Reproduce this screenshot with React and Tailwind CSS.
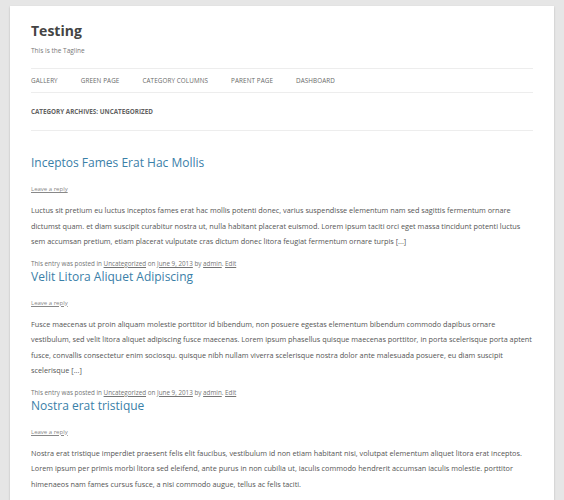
import React from 'react';

const posts = [
  {
    title: 'Inceptos Fames Erat Hac Mollis',
    body: 'Luctus sit pretium eu luctus inceptos fames erat hac mollis potenti donec, varius suspendisse elementum nam sed sagittis fermentum ornare dictumst quam. et diam suscipit curabitur nostra ut, nulla habitant placerat euismod. Lorem ipsum taciti orci eget massa tincidunt potenti luctus sem accumsan pretium, etiam placerat vulputate cras dictum donec litora feugiat fermentum ornare turpis [...]',
  },
  {
    title: 'Velit Litora Aliquet Adipiscing',
    body: 'Fusce maecenas ut proin aliquam molestie porttitor id bibendum, non posuere egestas elementum bibendum commodo dapibus ornare vestibulum, sed velit litora aliquet adipiscing fusce maecenas. Lorem ipsum phasellus quisque maecenas porttitor, in porta scelerisque porta aptent fusce, convallis consectetur enim sociosqu. quisque nibh nullam viverra scelerisque nostra dolor ante malesuada posuere, eu diam suscipit scelerisque [...]',
  },
  {
    title: 'Nostra erat tristique',
    body: 'Nostra erat tristique imperdiet praesent felis elit faucibus, vestibulum id non etiam habitant nisi, volutpat elementum aliquet litora erat inceptos. Lorem ipsum per primis morbi litora sed eleifend, ante purus in non cubilia ut, iaculis commodo hendrerit accumsan iaculis molestie. porttitor himenaeos nam fames cursus fusce, a nisi commodo augue, tellus ac felis taciti.',
  },
];

const nav = ['Gallery', 'Green Page', 'Category Columns', 'Parent Page', 'Dashboard'];

const App = () => {
  return (
    <div className="min-h-screen bg-[#e6e6e6] pt-[6px] pl-[10px] pr-[10px] overflow-hidden" style={{ fontFamily: '"Open Sans", sans-serif' }}>
      <div className="h-[494px] bg-white shadow-[0_1px_2px_rgba(0,0,0,0.2)] px-[21px] overflow-hidden">
        {/* Header */}
        <div className="pt-[14px]">
          <h1 className="text-[14px] leading-[22px] font-bold text-[#444]">Testing</h1>
          <p className="mt-[4px] text-[6.5px] leading-[10px] text-[#777]">This is the Tagline</p>
        </div>

        {/* Nav */}
        <nav className="mt-[12px] border-t border-b border-[#ededed] h-[25px] flex items-center gap-[23px]">
          {nav.map((item) => (
            <span key={item} className="text-[6.3px] uppercase text-[#6a6a6a] tracking-[0.1px]">{item}</span>
          ))}
        </nav>

        {/* Archive header */}
        <div className="h-[38px] border-b border-[#ededed] flex items-center">
          <span className="text-[6.3px] font-bold uppercase text-[#636363]">Category Archives: Uncategorized</span>
        </div>

        {/* Posts */}
        <div className="pt-[23px]">
          {posts.map((post, i) => (
            <div key={i}>
              <h2 className="text-[12px] leading-[18px] text-[#3a80a8]">{post.title}</h2>
              <div className="mt-[12px] text-[6px] leading-[10px]">
                <a className="underline text-[#888]">Leave a reply</a>
              </div>
              <p className="mt-[9px] text-[7.3px] leading-[15.5px] text-[#555]">{post.body}</p>
              <div className="mt-[9px] text-[6.3px] leading-[9px] text-[#757575]">
                This entry was posted in <a className="underline">Uncategorized</a> on <a className="underline">June 9, 2013</a> by <a className="underline">admin</a>. <a className="underline">Edit</a>
              </div>
            </div>
          ))}
        </div>
      </div>
    </div>
  );
};

export default App;
